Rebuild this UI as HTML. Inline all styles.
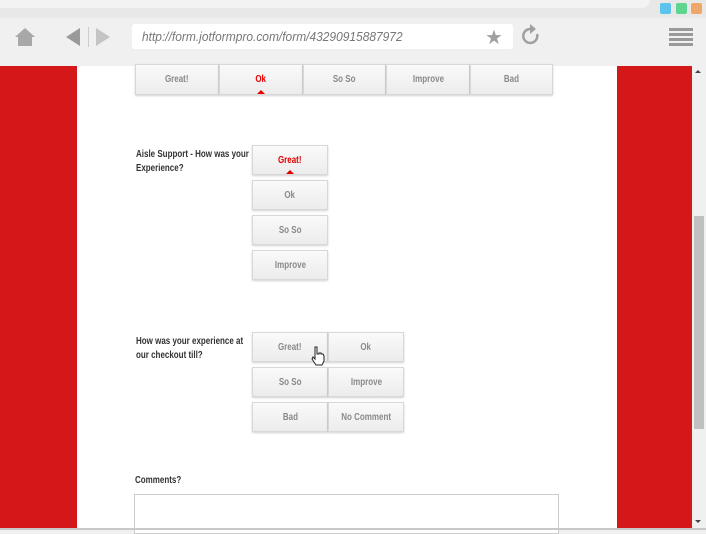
<!DOCTYPE html>
<html><head><style>
*{margin:0;padding:0;box-sizing:border-box}
body{width:706px;height:530px;overflow:hidden;background:#f0f0f0;font-family:"Liberation Sans",sans-serif;position:relative}
.a{position:absolute}
.btn{position:absolute;background:linear-gradient(#fafafa,#ececec);border:1px solid #d8d8d8;box-shadow:0 1px 2px rgba(0,0,0,.18);color:#8a8a8a;font-size:10px;font-weight:bold;text-align:center;display:flex;align-items:center;justify-content:center}
.btn span{display:inline-block;transform:scaleX(.8);white-space:nowrap}
.sel{color:#e30000}
.tri{position:absolute;bottom:0;left:50%;margin-left:-4px;width:0;height:0;border-left:4px solid transparent;border-right:4px solid transparent;border-bottom:4px solid #e30000}
.lbl{position:absolute;font-size:10px;font-weight:bold;color:#333;line-height:14px;transform:scaleX(.8);transform-origin:left top}
</style></head><body>
<div class="a" style="left:0;top:0;width:706px;height:18px;background:#e8e8e8"></div>
<div class="a" style="left:0;top:0;width:650px;height:8px;background:#f3f3f3;border-radius:0 0 8px 0"></div>
<div class="a" style="left:660px;top:3px;width:11px;height:11px;background:#5bc3ec;border-radius:2px"></div>
<div class="a" style="left:676px;top:3px;width:11px;height:11px;background:#5fd690;border-radius:2px"></div>
<div class="a" style="left:691px;top:3px;width:11px;height:11px;background:#f0a86a;border-radius:2px"></div>
<div class="a" style="left:0;top:18px;width:706px;height:48px;background:#f0f0f0"></div>
<svg class="a" style="left:14px;top:26px" width="22" height="22" viewBox="0 0 22 22"><path d="M11 2 L21 11 L18 11 L18 20 L4 20 L4 11 L1 11 Z" fill="#a8a8a8"/></svg>
<svg class="a" style="left:64px;top:26px" width="50" height="22" viewBox="0 0 50 22"><path d="M2 11 L16 2 L16 20 Z" fill="#9a9a9a"/><rect x="24" y="1" width="1" height="20" fill="#ccc"/><path d="M32 2 L46 11 L32 20 Z" fill="#c4c4c4"/></svg>
<div class="a" style="left:132px;top:24px;width:381px;height:25px;background:#fff;border-radius:3px"></div>
<div class="a" style="left:142px;top:29px;font-style:italic;font-size:13px;color:#777;transform:scaleX(.92);transform-origin:left top">http://form.jotformpro.com/form/43290915887972</div>
<div class="a" style="left:485px;top:25px;font-size:20px;color:#a0a0a0;font-family:'DejaVu Sans',sans-serif">★</div>
<svg class="a" style="left:520px;top:24px" width="22" height="24" viewBox="0 0 22 24"><path d="M17 10 A7 7 0 1 1 11 5" fill="none" stroke="#a0a0a0" stroke-width="2.5"/><path d="M10 0 L16 5 L10 10 Z" fill="#a0a0a0"/></svg>
<div class="a" style="left:669px;top:28px;width:24px;height:3px;background:#999;box-shadow:0 5px 0 #999,0 10px 0 #999,0 15px 0 #999"></div>
<div class="a" style="left:0;top:66px;width:692px;height:464px;background:#fff"></div>
<div class="a" style="left:0;top:66px;width:77px;height:464px;background:#d41719"></div>
<div class="a" style="left:617px;top:66px;width:75px;height:464px;background:#d41719"></div>
<div class="a" style="left:692px;top:66px;width:14px;height:464px;background:#f0f0f0"></div>
<div class="a" style="left:694px;top:216px;width:10px;height:213px;background:#c0c0c0"></div>
<div class="a" style="left:695px;top:70px;width:0;height:0;border-left:3px solid transparent;border-right:3px solid transparent;border-bottom:3px solid #444"></div>
<div class="a" style="left:695px;top:520px;width:0;height:0;border-left:3px solid transparent;border-right:3px solid transparent;border-top:3px solid #444"></div>

<div class="btn" style="left:135px;top:64px;width:84px;height:31px"><span>Great!</span></div>
<div class="btn sel" style="left:219px;top:64px;width:84px;height:31px"><span>Ok</span><div class="tri"></div></div>
<div class="btn" style="left:303px;top:64px;width:83px;height:31px"><span>So So</span></div>
<div class="btn" style="left:386px;top:64px;width:84px;height:31px"><span>Improve</span></div>
<div class="btn" style="left:470px;top:64px;width:83px;height:31px"><span>Bad</span></div>

<div class="lbl" style="left:136px;top:148px;width:148px">Aisle Support - How was your Experience?</div>
<div class="btn sel" style="left:252px;top:145px;width:76px;height:30px"><span>Great!</span><div class="tri"></div></div>
<div class="btn" style="left:252px;top:180px;width:76px;height:30px"><span>Ok</span></div>
<div class="btn" style="left:252px;top:215px;width:76px;height:30px"><span>So So</span></div>
<div class="btn" style="left:252px;top:250px;width:76px;height:30px"><span>Improve</span></div>

<div class="lbl" style="left:136px;top:335px;width:146px">How was your experience at our checkout till?</div>
<div class="btn" style="left:252px;top:332px;width:76px;height:30px"><span>Great!</span></div>
<div class="btn" style="left:328px;top:332px;width:76px;height:30px"><span>Ok</span></div>
<div class="btn" style="left:252px;top:367px;width:76px;height:30px"><span>So So</span></div>
<div class="btn" style="left:328px;top:367px;width:76px;height:30px"><span>Improve</span></div>
<div class="btn" style="left:252px;top:402px;width:76px;height:30px"><span>Bad</span></div>
<div class="btn" style="left:328px;top:402px;width:76px;height:30px"><span>No Comment</span></div>
<svg class="a" style="left:311px;top:346px" width="14" height="20" viewBox="0 0 14 20"><path d="M4 1 L6 1 L6 8 L8 8 L8 7 L10 7 L10 8 L12 8 L13 10 L13 15 L11 19 L5 19 L1 13 L2 11 L4 13 Z" fill="#fff" stroke="#222" stroke-width="1"/></svg>

<div class="lbl" style="left:135px;top:474px">Comments?</div>
<div class="a" style="left:134px;top:494px;width:425px;height:40px;border:1px solid #ccc;background:#fff"></div>
<div class="a" style="left:0;top:528px;width:706px;height:2px;background:#c8c8c8"></div>
</body></html>
